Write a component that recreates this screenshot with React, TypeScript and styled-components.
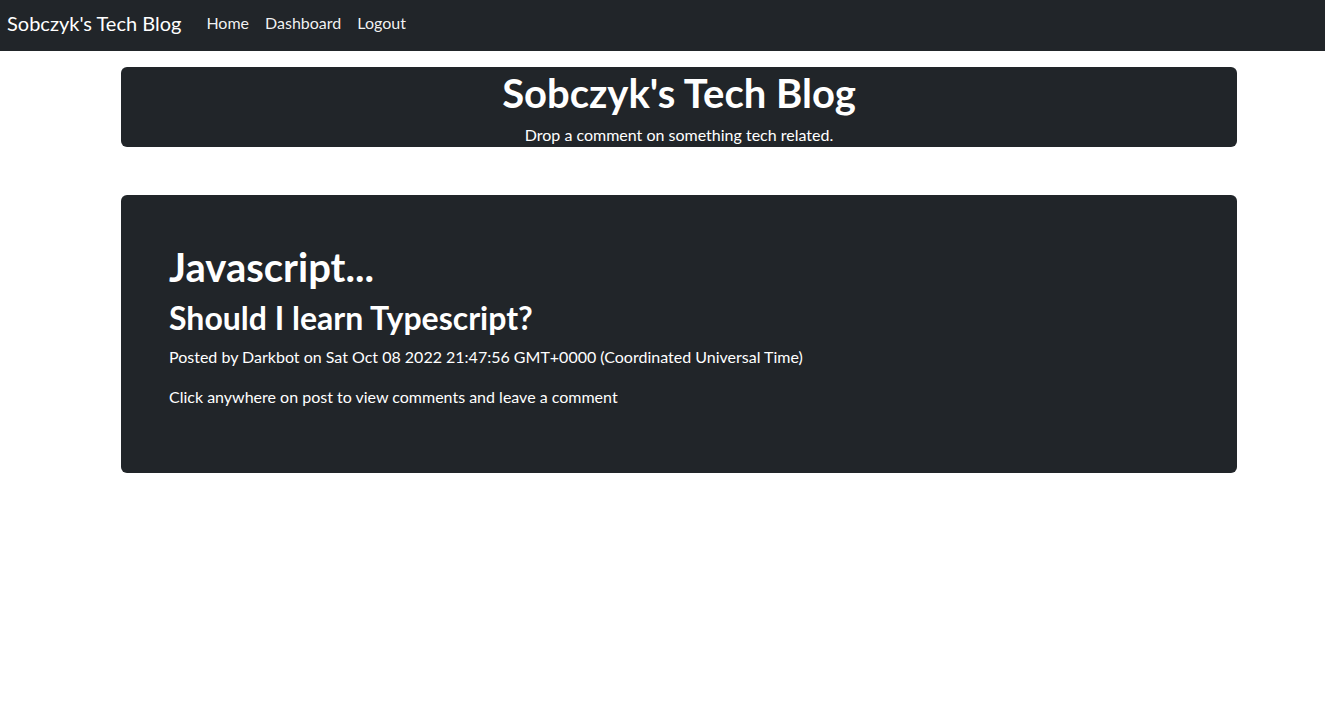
import React from "react";
import styled, { createGlobalStyle } from "styled-components";

const GlobalStyle = createGlobalStyle`
  * { box-sizing: border-box; }
  body {
    margin: 0;
    background: #fff;
    color: #212529;
    font-family: "Lato", "Noto Sans", sans-serif;
    font-size: 16px;
    line-height: 1.5;
  }
`;

const NavBar = styled.nav`
  display: flex;
  align-items: center;
  height: 51px;
  padding: 0 7px 6px;
  background: #212529;
`;

const Brand = styled.a`
  color: #fff;
  font-size: 20px;
  line-height: 30px;
  margin-right: 17px;
  text-decoration: none;
`;

const NavLinks = styled.div`
  display: flex;
`;

const NavLink = styled.a`
  color: rgba(255, 255, 255, 0.95);
  padding: 8px;
  text-decoration: none;
`;

const Container = styled.main`
  width: 1116px;
  margin: 16px 0 0 121px;
  display: flex;
  flex-direction: column;
  gap: 48px;
`;

const DarkCard = styled.section<{ $padded?: boolean }>`
  background: #212529;
  color: #fff;
  border-radius: 6px;
  padding: ${(p) => (p.$padded ? "48px" : "2px 0 0")};
`;

const Header = styled(DarkCard)`
  text-align: center;
  height: 80px;
`;

const SiteTitle = styled.h1`
  margin: 0 0 6px;
  font-size: 40px;
  font-weight: 700;
  line-height: 1.2;
`;

const Tagline = styled.p`
  margin: 0;
`;

const PostTopic = styled.h1`
  margin: 0 0 8px;
  font-size: 40px;
  font-weight: 700;
  line-height: 1.2;
`;

const PostTitle = styled.h2`
  margin: 0 0 8px;
  font-size: 32px;
  font-weight: 700;
  line-height: 1.2;
`;

const Text = styled.p`
  margin: 0 0 16px;
`;

export default function App(): JSX.Element {
  return (
    <>
      <GlobalStyle />
      <NavBar>
        <Brand href="#">Sobczyk's Tech Blog</Brand>
        <NavLinks>
          <NavLink href="#">Home</NavLink>
          <NavLink href="#">Dashboard</NavLink>
          <NavLink href="#">Logout</NavLink>
        </NavLinks>
      </NavBar>
      <Container>
        <Header>
          <SiteTitle>Sobczyk's Tech Blog</SiteTitle>
          <Tagline>Drop a comment on something tech related.</Tagline>
        </Header>
        <DarkCard $padded>
          <PostTopic>Javascript...</PostTopic>
          <PostTitle>Should I learn Typescript?</PostTitle>
          <Text>
            Posted by Darkbot on Sat Oct 08 2022 21:47:56 GMT+0000 (Coordinated
            Universal Time)
          </Text>
          <Text>Click anywhere on post to view comments and leave a comment</Text>
        </DarkCard>
      </Container>
    </>
  );
}
